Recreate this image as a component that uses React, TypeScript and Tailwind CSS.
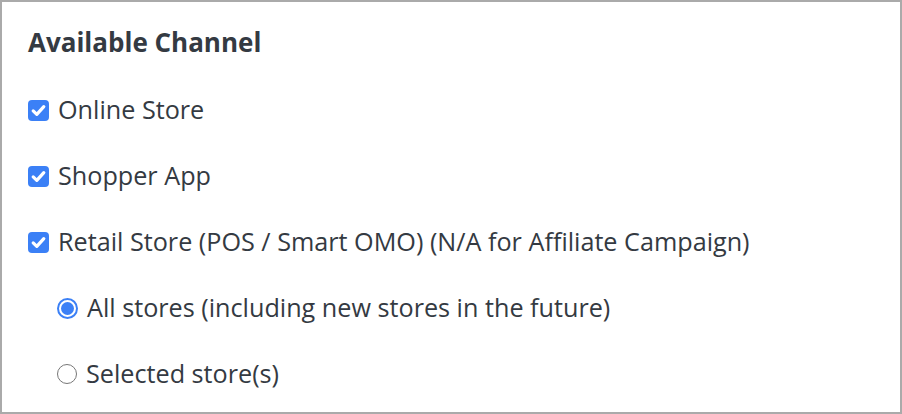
const channels = [
  { label: 'Online Store' },
  { label: 'Shopper App' },
  { label: 'Retail Store (POS / Smart OMO) (N/A for Affiliate Campaign)' },
];

const storeOptions = [
  { label: 'All stores (including new stores in the future)', checked: true },
  { label: 'Selected store(s)', checked: false },
];

function CheckBox() {
  return (
    <span className="w-[21px] h-[21px] rounded-[4px] bg-[#3b80f6] flex items-center justify-center shrink-0">
      <svg width="21" height="21" viewBox="0 0 21 21">
        <path d="M5.2 10.9 L8.8 14.4 L15.8 6.6" fill="none" stroke="white" strokeWidth="3.2" strokeLinecap="round" strokeLinejoin="round" />
      </svg>
    </span>
  );
}

function Radio({ checked }: { checked: boolean }) {
  if (checked) {
    return (
      <span className="w-[21px] h-[21px] rounded-full border-[2px] border-[#3b80f6] bg-white flex items-center justify-center shrink-0">
        <span className="w-[13px] h-[13px] rounded-full bg-[#3b80f6]" />
      </span>
    );
  }
  return <span className="w-[20px] h-[20px] rounded-full border-[1.5px] border-[#777777] bg-white shrink-0" />;
}

export default function App() {
  return (
    <div className="w-[902px] h-[414px] bg-white border-2 border-[#aaaaaa] text-[#343a42] font-['Open_Sans',sans-serif]">
      <div className="pl-[26px] pt-[25px]">
        <h2 className="h-[30px] leading-[30px] text-[26px] font-bold">Available Channel</h2>
        <div className="mt-[20px] flex flex-col">
          {channels.map(c => (
            <label key={c.label} className="h-[66px] flex items-center gap-[9px] text-[25.2px]">
              <CheckBox />
              <span>{c.label}</span>
            </label>
          ))}
          {storeOptions.map(o => (
            <label key={o.label} className="h-[66px] flex items-center gap-[9px] pl-[29px] text-[25.2px]">
              <Radio checked={o.checked} />
              <span>{o.label}</span>
            </label>
          ))}
        </div>
      </div>
    </div>
  );
}
